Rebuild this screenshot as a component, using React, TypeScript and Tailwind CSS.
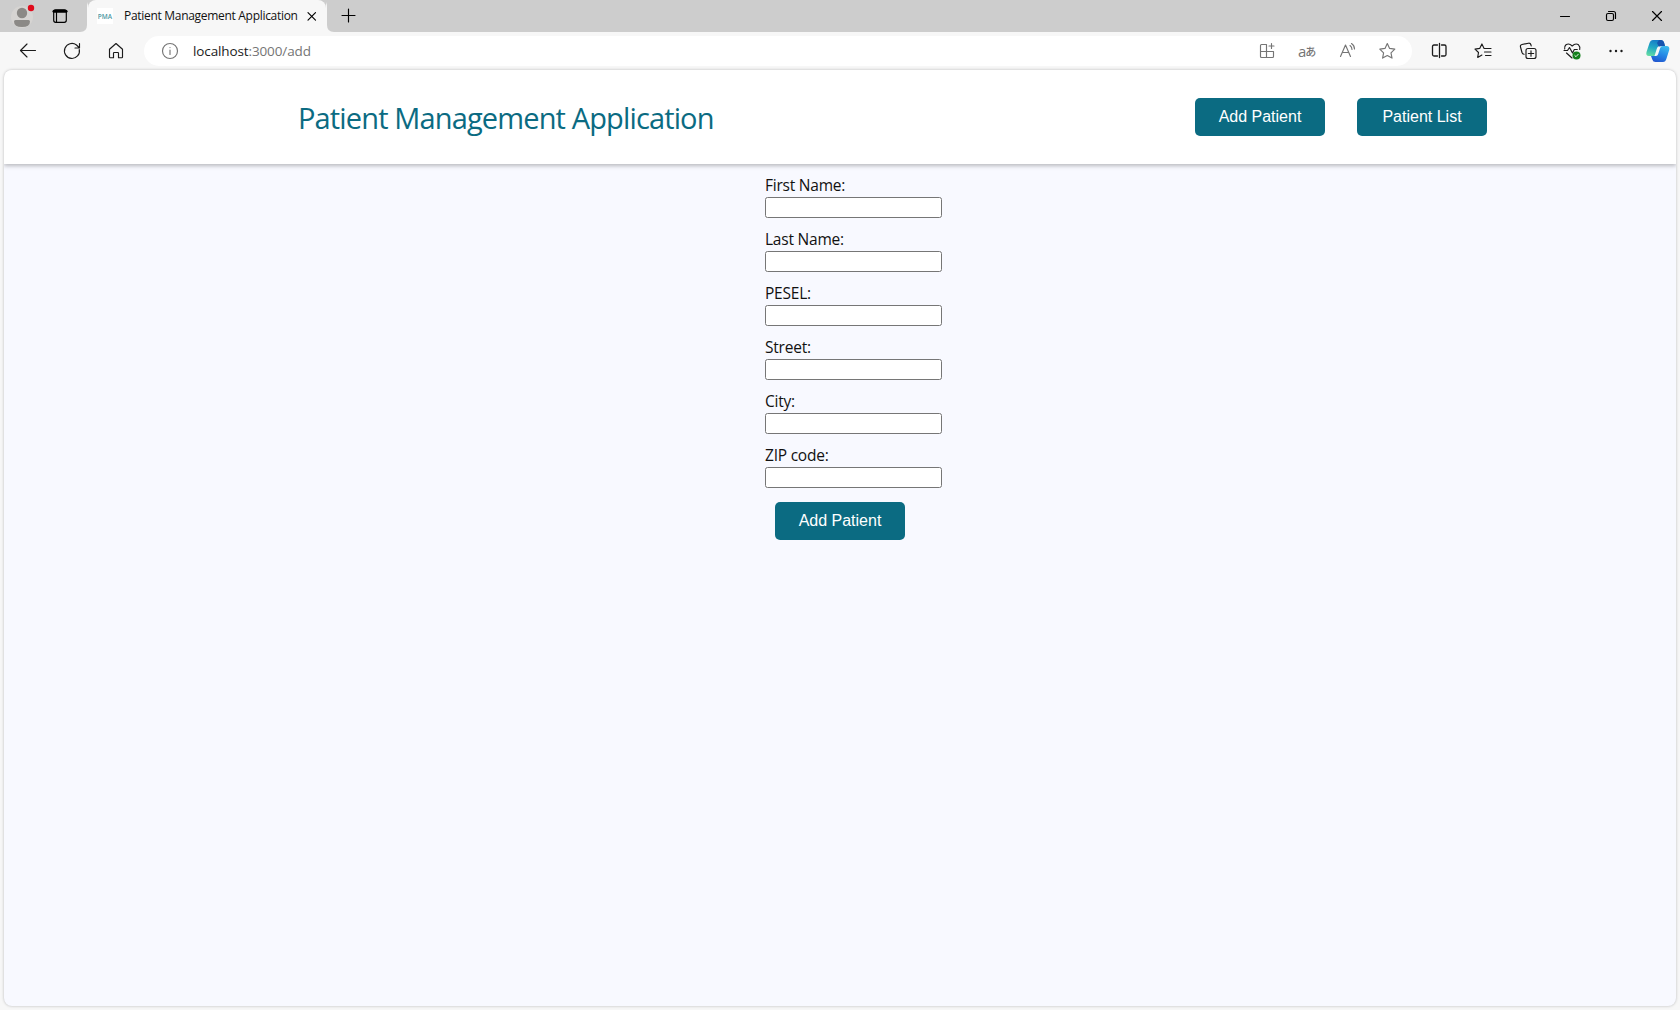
import React from "react";

const fields = ["First Name:", "Last Name:", "PESEL:", "Street:", "City:", "ZIP code:"];

function Icon({ children, w = 20, h = 20, className = "" }: { children: React.ReactNode; w?: number; h?: number; className?: string }) {
  return (
    <svg width={w} height={h} viewBox={`0 0 ${w} ${h}`} fill="none" stroke="currentColor" strokeWidth="1.15" strokeLinecap="round" strokeLinejoin="round" className={`block shrink-0 ${className}`}>
      {children}
    </svg>
  );
}

function Button({ children, className = "" }: { children: string; className?: string }) {
  return (
    <button className={`block h-[38px] w-[130px] rounded-[5px] bg-[#0b6b82] text-center font-['Liberation_Sans',Arial,sans-serif] text-[16px] leading-[38px] text-white ${className}`}>
      {children}
    </button>
  );
}

function TabStrip() {
  return (
    <div className="flex h-8 bg-[#cdcdcd] text-black">
      <Icon w={26} h={32} className="ml-[10px]">
        <g stroke="none">
          <circle cx="12" cy="17" r="11" fill="#d6d4d2" />
          <circle cx="12" cy="13" r="5.2" fill="#8b8986" />
          <path d="M4 21.5Q4 20 5.5 20h13q1.500 0 1.500 1.500Q20 27 12 27T4 21.500z" fill="#8b8986" />
          <circle cx="21" cy="8" r="3.200" fill="#e00b1c" />
        </g>
      </Icon>
      <Icon w={20} h={32} className="ml-[14px]">
        <rect x="3.700" y="9.700" width="12.600" height="12.600" rx="2" />
        <path d="M4 11.300h12" strokeWidth="3" />
        <path d="M6.500 12v10" />
      </Icon>
      <div className="ml-[10px] flex">
        <svg width="8" height="32" className="block"><path d="M0 32Q7 32 7 25V8Q7 4 8 2V32z" fill="#f7f7f7" /></svg>
        <div className="flex h-8 w-[238px] rounded-t-lg bg-[#f7f7f7]">
          <span className="ml-[9px] mt-2 h-4 w-4 whitespace-nowrap bg-white text-center font-['Open_Sans',sans-serif] text-[6.500px] font-semibold leading-[17px] text-[#4b97a2]">PMA</span>
          <span className="ml-[11px] w-[181px] whitespace-nowrap font-['Open_Sans',sans-serif] text-[12px] leading-8 tracking-[-0.3px] text-[#111]">Patient Management Application</span>
          <Icon w={14} h={32}><path d="M3 12.700l7.500 7.500m0-7.500l-7.500 7.500" /></Icon>
        </div>
        <svg width="8" height="32" className="block"><path d="M0 2Q1 4 1 8v17q0 7 7 7H0z" fill="#f7f7f7" /></svg>
      </div>
      <Icon w={20} h={32} className="ml-[4px]"><path d="M4 15.500h13M10.500 9v13" /></Icon>
      <div className="ml-auto flex">
        <Icon w={46} h={32}><path d="M18.500 16.500h9" /></Icon>
        <Icon w={46} h={32}>
          <rect x="18.500" y="13.500" width="7" height="7" rx="1.500" />
          <path d="M20.500 11.500h5q2 0 2 2v5" />
        </Icon>
        <Icon w={46} h={32}><path d="M18.500 11.500l9 9m0-9l-9 9" /></Icon>
      </div>
    </div>
  );
}

function Toolbar() {
  return (
    <div className="flex h-[38px] items-center bg-[#f7f7f7] text-[#1b1b1b]">
      <Icon className="ml-[18px]"><path d="M2.500 9.500h15M9 3L2.500 9.500 9 16" /></Icon>
      <Icon className="ml-[24px]"><path d="M17.300 8.500A7.500 7.500 0 1 1 14.500 4l2.500 2.500M17.500 2.500v4.500H13" /></Icon>
      <Icon className="ml-[24px]"><path d="M3.500 8.300L10 2.500l6.500 5.800V16q0 .700-.700.700h-3.300v-4.500q0-.700-.700-.700H8.200q-.700 0-.700.700v4.500H4.200q-.700 0-.700-.700z" /></Icon>
      <div className="ml-[18px] flex h-[30px] w-[1268px] items-center rounded-full bg-white text-[#757575]">
        <Icon className="ml-[16px]">
          <circle cx="10" cy="10" r="7.500" />
          <path d="M10 9v4.500M10 6.500v.100" />
        </Icon>
        <span className="ml-[13px] pb-px font-['Open_Sans',sans-serif] text-[13.500px] leading-5 tracking-[-0.12px]">
          <span className="text-[#1b1b1b]">localhost</span>:3000/add
        </span>
        <div className="ml-auto mr-[15px] flex gap-5">
          <Icon><path d="M8.500 3.500h-4q-1 0-1 1v11q0 1 1 1h11q1 0 1-1v-5h-13M9.500 3.500v13M9 3.500h.500M14.500 2.500v5M12 5h5" /></Icon>
          <span className="flex h-5 w-5 items-center pl-px font-['Open_Sans','Noto_Sans_CJK_JP',sans-serif] leading-5">
            <span className="pb-px text-[15px]">a</span><span className="-ml-px font-['Noto_Sans_CJK_JP',sans-serif] text-[11px] font-medium">あ</span>
          </span>
          <Icon><path d="M3.500 15.500L8.500 4l5 11.500M5.200 11.500h6.600M13 4.500q2 1.500 2 4M14.500 2.500q3 2 3 5.500" /></Icon>
          <Icon><path d="M10.300 2.500l2.300 4.900 5.200.700-3.800 3.700 1 5.300-4.700-2.600-4.700 2.600 1-5.300-3.800-3.700 5.200-.700z" /></Icon>
        </div>
      </div>
      <div className="ml-[17px] flex gap-[24.300px]">
        <Icon><path d="M8.500 4H5Q3.500 4 3.500 5.500v8Q3.500 15 5 15h3.500M12.500 4h3Q17 4 17 5.500v8Q17 15 15.500 15h-3M10.500 2.500v14" strokeWidth="1.300" /></Icon>
        <Icon><path d="M13 7.500L11.100 7.400 8.900 2.900 6.700 7.400 2 8.100l3.500 3.400-.800 4.900L8.900 14M11.500 7.500h6.500M11.500 11h6.500M12.500 14.500h5.500" /></Icon>
        <Icon>
          <rect x="8" y="7.500" width="10" height="10" rx="2" />
          <path d="M13 9.800v5.400M10.300 12.500h5.400M6 13.300Q4.500 13 4 11.500L2.500 6Q2 4 4 3.500L10.500 2.200Q12.500 2 13 4l.200 1" />
        </Icon>
        <Icon>
          <path d="M2.700 8Q2 5.500 4 3.800 7 1.800 10.200 5 13.500 1.800 16.500 3.800q2 2 1.200 4.700M2 9.500h3.500l2-3 3 5.500 1.800-3.500h3M4.500 12l5.500 5" />
          <circle cx="14.500" cy="14.500" r="4" fill="#13801b" stroke="none" />
          <path d="M12.800 14.500l1.200 1.200 2.300-2.500" stroke="white" strokeWidth=".9" />
        </Icon>
        <Icon><g fill="currentColor" stroke="none"><circle cx="4.500" cy="10" r="1.200" /><circle cx="10" cy="10" r="1.200" /><circle cx="15.500" cy="10" r="1.200" /></g></Icon>
      </div>
      <svg width="26" height="26" viewBox="0 0 26 26" className="ml-[19px] block shrink-0">
        <defs>
          <linearGradient id="copilotLeft" x1=".6" y1="0" x2=".3" y2="1"><stop stopColor="#1478c8" /><stop offset=".5" stopColor="#22a8c4" /><stop offset="1" stopColor="#62dba4" /></linearGradient>
          <linearGradient id="copilotRight" x1=".7" y1="0" x2=".3" y2="1"><stop stopColor="#39b9ed" /><stop offset=".5" stopColor="#2588e6" /><stop offset="1" stopColor="#2156cf" /></linearGradient>
        </defs>
        <path d="M8 2h8q2.500 0 3 2.500l1 3.500h-3.500q-2 0-2.700 2l-2 5.500Q10.800 18 8.500 18H4Q.500 18 1.500 14L4.500 5Q5.500 2 8 2z" fill="url(#copilotLeft)" />
        <path d="M18 8h3.500q3.500 0 2.700 4l-2.700 8.500q-1 3.500-3.500 3.500h-7.500q-2.500 0-3.200-2.500L6 18H9q2 0 2.700-2l2.600-6q.700-2 3.700-2z" fill="url(#copilotRight)" />
        <path d="M14 2h2q2.500 0 3 2.500l1 3.500h-3.500q-1.500 0-2.300 1.500L12 5z" fill="#1654ae" />
        <path d="M13.200 8.500h3.300q-1 .5-1.500 2l-1.800 5.500q-.600 2-2.200 2H9.500l2.200-7q.5-1.800 1.500-2.500z" fill="#f7f7f7" />
      </svg>
    </div>
  );
}

export default function App() {
  return (
    <div className="flex h-[1010px] w-[1680px] flex-col overflow-hidden bg-[#f7f7f7]">
      <TabStrip />
      <Toolbar />
      <main className="mx-1 h-[936px] overflow-hidden rounded-lg bg-[#f8f9ff] font-['Open_Sans',sans-serif] shadow-[0_0_3px_rgba(0,0,0,0.25)]">
        <header className="flex h-[94px] bg-white pl-[294px] shadow-[0_2px_4px_rgba(0,0,0,0.25)]">
          <h1 className="mt-[28px] w-[897px] whitespace-nowrap text-[29px] leading-[40px] tracking-[-0.86px] text-[#0b6b82]">Patient Management Application</h1>
          <nav className="mt-[28px] flex gap-8">
            <Button>Add Patient</Button>
            <Button>Patient List</Button>
          </nav>
        </header>
        <form className="ml-[761px] mt-[11px] w-[177px]">
          {fields.map((label) => (
            <label key={label} className="block h-[54px] text-[15.500px] leading-[20px] tracking-[-0.22px] text-[#111]">
              {label}
              <input className="mt-[2px] block h-[21px] w-[177px] rounded-[2.500px] border border-[#767676] bg-white" />
            </label>
          ))}
          <Button className="ml-[10px] mt-[3px]">Add Patient</Button>
        </form>
      </main>
    </div>
  );
}
